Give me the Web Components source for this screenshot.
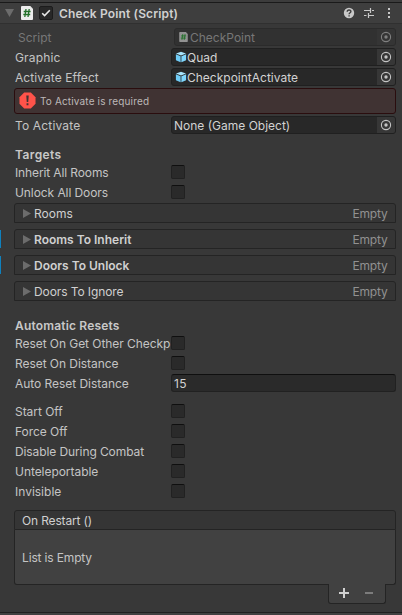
<!DOCTYPE html>
<html lang="en"><head><meta charset="utf-8"><title>Inspector</title>
<style>
html,body{margin:0;background:#383838}
body{width:402px;height:615px;overflow:hidden;font:12px/18px Inter,"Liberation Sans",sans-serif;color:#c4c4c4;letter-spacing:0}
</style></head><body>
<unity-inspector>
 <component-header label="Check Point (Script)"></component-header>
 <prop-row label="Script" disabled><object-field icon="script" disabled>CheckPoint</object-field></prop-row>
 <prop-row label="Graphic" style="letter-spacing:.15px"><object-field icon="cube">Quad</object-field></prop-row>
 <prop-row label="Activate Effect" style="letter-spacing:.08px"><object-field icon="cube">CheckpointActivate</object-field></prop-row>
 <help-box>To Activate is required</help-box>
 <prop-row label="To Activate" style="letter-spacing:.16px"><object-field style="letter-spacing:0">None (Game Object)</object-field></prop-row>
 <section-title style="letter-spacing:.4px">Targets</section-title>
 <prop-row toggle label="Inherit All Rooms" style="letter-spacing:-.12px"><check-toggle></check-toggle></prop-row>
 <prop-row toggle label="Unlock All Doors" style="letter-spacing:-.08px"><check-toggle></check-toggle></prop-row>
 <fold-list style="margin-top:-1px">Rooms</fold-list>
 <fold-list changed>Rooms To Inherit</fold-list>
 <fold-list changed>Doors To Unlock</fold-list>
 <fold-list style="letter-spacing:-.1px">Doors To Ignore</fold-list>
 <section-title>Automatic Resets</section-title>
 <prop-row toggle label="Reset On Get Other Checkp" style="letter-spacing:-.06px"><check-toggle></check-toggle></prop-row>
 <prop-row toggle label="Reset On Distance" style="letter-spacing:-.05px"><check-toggle></check-toggle></prop-row>
 <prop-row label="Auto Reset Distance" style="margin-top:-1px;letter-spacing:-.04px"><text-field>15</text-field></prop-row>
 <prop-row toggle label="Start Off" style="margin-top:9px;letter-spacing:-.05px"><check-toggle></check-toggle></prop-row>
 <prop-row toggle label="Force Off" style="letter-spacing:-.05px"><check-toggle></check-toggle></prop-row>
 <prop-row toggle label="Disable During Combat" style="letter-spacing:-.1px"><check-toggle></check-toggle></prop-row>
 <prop-row toggle label="Unteleportable" style="letter-spacing:-.05px"><check-toggle></check-toggle></prop-row>
 <prop-row toggle label="Invisible"><check-toggle></check-toggle></prop-row>
 <event-list label="On Restart ()">List is Empty</event-list>
</unity-inspector>
<script>
const define=(name,render)=>customElements.define(name,class extends HTMLElement{
  connectedCallback(){ if(!this.shadowRoot) this.attachShadow({mode:'open'}).innerHTML='<style>*{box-sizing:border-box}svg{display:block;flex:none}</style>'+render(this); }
});
const cube='<svg width="12" height="12" viewBox="0 0 12 12"><path d="M6 .7 11 2.6 6 4.6 1 2.6Z" fill="#a8e4fc"/><path d="M.9 3.3 5.6 5.2V11.3L.9 9.2Z" fill="#6fcbf5"/><path d="M11.1 3.3 6.4 5.2V11.3L11.1 9.2Z" fill="#7fd6fd"/></svg>';
const scriptIcon=(w,h,bg)=>`<svg width="${w}" height="${h}" viewBox="0 0 12 14"><path d="M1 0H9.3L12 2.7V13a1 1 0 0 1-1 1H1a1 1 0 0 1-1-1V1a1 1 0 0 1 1-1Z" fill="${bg}"/><path d="M5 3 3.8 11M8.2 3 7 11M2.7 5.5H9.6M2.3 8.5H9.2" stroke="#23702a" stroke-width="1.3" fill="none"/></svg>`;
const tri='<svg width="8" height="9" viewBox="0 0 8 9"><path d="M0 0 8 4.5 0 9Z" fill="#6c6c6c"/></svg>';

define('unity-inspector',()=>`<style>:host{display:flex;flex-direction:column;width:402px;height:615px;background:#383838;border-top:2px solid #3c3c3c;box-sizing:border-box}
.end{height:3px;margin-top:auto;border-top:1px solid #202020;background:#414141;flex:none}</style><slot></slot><div class="end"></div>`);

define('component-header',e=>`<style>:host{display:flex;align-items:center;box-sizing:border-box;height:22px;flex:none;background:#3e3e3e;border-top:1px solid #1a1a1a;border-bottom:1px solid #303030;padding:0 10px 0 5px;margin-bottom:4px}
b{font-weight:600;color:#d0d0d0;flex:1;margin-left:6px;letter-spacing:.14px;padding-top:1px}
.c{width:14px;height:14px;border:1px solid #1c1c1c;border-radius:2px;background:#282828;margin-left:6px}
.i{display:flex;align-items:center}</style>
<svg width="9" height="8" viewBox="0 0 9 8"><path d="M0 0H9L4.5 8Z" fill="#6c6c6c"/></svg>
<span style="margin-left:7px">${scriptIcon(12,14,'#ececec')}</span>
<span class="c"><svg width="12" height="12" viewBox="0 0 12 12"><path d="M2.2 6.2 4.6 8.6 9.8 3.3" stroke="#e8e8e8" stroke-width="1.6" fill="none"/></svg></span>
<b>${e.getAttribute('label')}</b>
<span class="i"><svg width="49" height="12" viewBox="0 0 49 12"><circle cx="6" cy="6" r="5.2" fill="#c8c8c8"/><path d="M4.2 4.8C4.2 2.3 7.9 2.4 7.9 4.6 7.9 5.8 6.1 5.8 6.1 7.2M6.1 8.2V9.6" stroke="#3e3e3e" stroke-width="1.4" fill="none"/>
<path d="M21 3.5H27M29 3.5H31M21 8.5H23.5M26 8.5H31M27.5 1V6M25.5 6V11" stroke="#c8c8c8" stroke-width="1.2"/>
<path d="M45 1h2v2h-2zM45 5h2v2h-2zM45 9h2v2h-2z" fill="#c8c8c8"/></svg></span>`);

define('prop-row',e=>{const d=e.hasAttribute('disabled');return `<style>:host{display:grid;grid-template-columns:${d?'153px 222px':'156px 225px'};height:18px;flex:none;margin-bottom:2px;padding-left:${d?18:15}px;${d?'color:#777':''}}
span{overflow:hidden;white-space:nowrap;padding-top:${e.hasAttribute('toggle')?0:1}px;height:19px;width:156px}
::slotted(*){margin-left:${d?3:0}px}
::slotted(object-field){letter-spacing:0}</style><span>${e.getAttribute('label')}</span><slot></slot>`});

define('object-field',e=>{const d=e.hasAttribute('disabled'),k=e.getAttribute('icon');return `<style>:host{display:flex;align-items:center;box-sizing:border-box;height:18px;width:${d?222:225}px;border:1px solid ${d?'#2b2b2b':'#202020'};border-radius:3px;background:${d?'#313131':'#282828'};padding-left:${k?3:2}px;color:${d?'#777':'#d2d2d2'};overflow:hidden}
.t{flex:1;margin-left:0;height:17px;line-height:18px;white-space:nowrap}.p{width:18px;height:16px;display:grid;place-items:center;background:${d?'#353535':'#373737'}}</style>
${k==='cube'?cube:k==='script'?`<span style="width:12px;padding-left:1px">${scriptIcon(9,10,'#929292')}</span>`:''}<span class="t"><slot></slot></span>
<span class="p"><svg width="12" height="12" viewBox="0 0 12 12"><circle cx="6" cy="6" r="4.6" fill="none" stroke="${d?'#808080':'#c4c4c4'}" stroke-width="1.1"/><circle cx="6" cy="6" r="1.7" fill="${d?'#808080':'#c4c4c4'}"/></svg></span>`});

define('text-field',()=>`<style>:host{display:block;box-sizing:border-box;width:225px;height:18px;border:1px solid #212121;border-top-color:#0f0f0f;border-radius:3px;background:#2a2a2a;color:#d2d2d2;padding-left:2px;line-height:18px;letter-spacing:.3px}</style><slot></slot>`);

define('check-toggle',()=>`<style>:host{display:block;box-sizing:border-box;width:14px;height:14px;margin-top:1px;border:1px solid #212121;border-top-color:#0f0f0f;border-radius:2px;background:#2a2a2a}</style>`);

define('help-box',()=>`<style>:host{display:flex;align-items:center;box-sizing:border-box;height:26px;flex:none;width:382px;margin:0 0 2px 14px;border:1px solid #2a0d0e;border-radius:3px;background:#403333;padding-left:4px;font-size:10px;letter-spacing:.15px;gap:4px;color:#bdb8b8}</style>
<svg width="17" height="17" viewBox="0 0 18 18" style="margin-top:-1px"><path d="M5.5.5H12.5L17.5 5.5V12.5L12.5 17.5H5.5L.5 12.5V5.5Z" fill="#ff534a"/><path d="M7.7 3.8H10.3L9.8 10.5H8.2ZM8 12H10V14H8Z" fill="#403333"/></svg><span><slot></slot></span>`);

define('section-title',()=>`<style>:host{display:flex;align-items:flex-end;box-sizing:border-box;height:28px;flex:none;font-weight:600;letter-spacing:.17px;padding-left:15px;color:#c8c8c8}</style><slot></slot>`);

define('fold-list',e=>{const c=e.hasAttribute('changed');return `<style>:host{display:flex;flex:none;height:20px;margin-bottom:6px}
.m{width:1px;height:18px;margin:1px 13px 0 0;background:${c?'#0f81be':'transparent'}}
.b{display:flex;align-items:center;width:382px;border:1px solid #242424;border-radius:3px 3px 0 0;background:#353535;padding:0 8px}
.t{flex:1;margin-left:3px;padding-top:1px;color:#d0d0d0;${c?'font-weight:600;letter-spacing:0':''}}.e{color:#919191;padding-top:1px;letter-spacing:-.2px;margin-right:-.5px}</style>
<i class="m"></i><div class="b">${tri}<span class="t"><slot></slot></span><span class="e">Empty</span></div>`});

define('event-list',e=>`<style>:host{display:block;flex:none;margin:7px 6px 0 14px;letter-spacing:-.15px}
.h{height:20px;border:1px solid #242424;border-radius:3px 3px 0 0;background:#353535;padding:1px 7px;color:#d0d0d0}
.b{height:55px;border:1px solid #242424;border-top:0;border-radius:0 0 3px 3px;background:#414141;padding:19px 7px 0}
.f{width:58px;height:20px;margin:-1px 10px 0 auto;border:1px solid #242424;border-top:0;border-radius:0 0 3px 3px;background:#414141;position:relative}</style>
<div class="h">${e.getAttribute('label')}</div><div class="b"><slot></slot></div>
<div class="f"><svg width="56" height="19" viewBox="0 0 56 19"><path d="M10 9H20M15 4V14" stroke="#d0d0d0" stroke-width="2"/><path d="M36 9H44" stroke="#7c7c7c" stroke-width="2"/></svg></div>`);
</script></body></html>
